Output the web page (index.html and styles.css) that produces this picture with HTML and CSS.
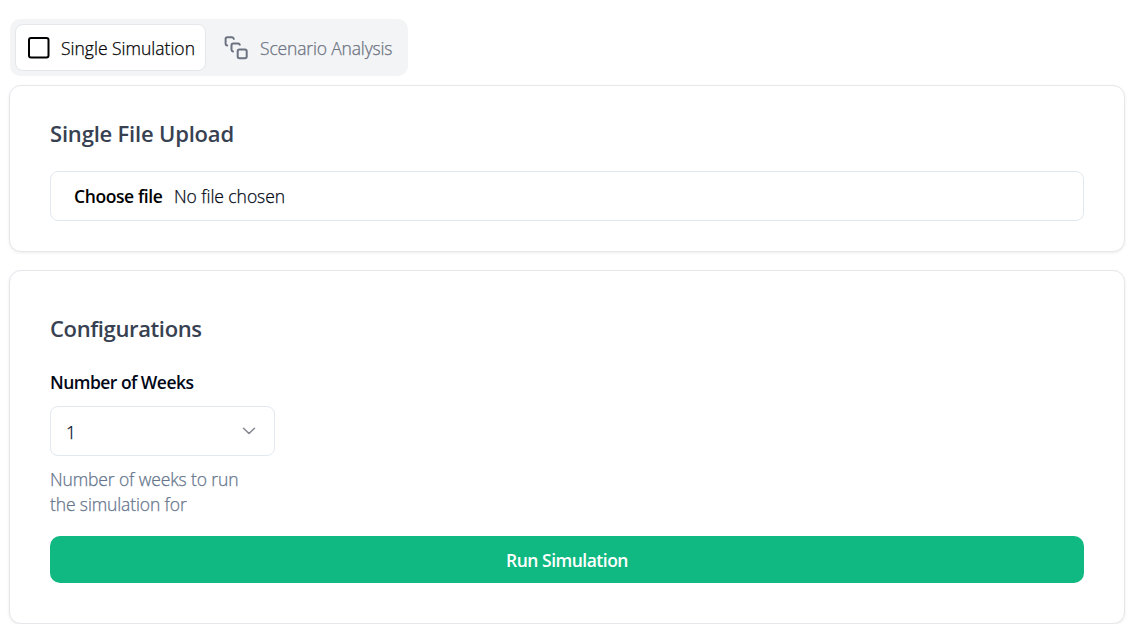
FILE: index.html
```html
<!DOCTYPE html>
<html lang="en">
<head>
<meta charset="utf-8">
<title>Simulation</title>
<link rel="stylesheet" href="styles.css">
</head>
<body>
<main class="page">
  <div class="tabs" role="tablist">
    <button class="tab tab-active" role="tab">
      <svg class="icon-square" viewBox="0 0 22 22" fill="none" stroke="currentColor" stroke-width="2"><rect x="1" y="1" width="19.5" height="19.5" rx="2"/></svg>
      <span class="t-single">Single Simulation</span>
    </button>
    <button class="tab" role="tab">
      <svg class="icon-group" viewBox="0 0 24 24" fill="none" stroke="currentColor" stroke-width="2" stroke-linecap="round" stroke-linejoin="round"><path d="M3.2 9.6A2 2 0 0 1 1.6 7.8V3.1A1.8 1.8 0 0 1 3.4 1.3H8A2 2 0 0 1 9.8 2.9M9 15.5A2 2 0 0 1 7.5 13.7V9.2A1.8 1.8 0 0 1 9.3 7.4H14A2 2 0 0 1 15.8 8.8"/><rect x="13.7" y="13.6" width="9" height="8.7" rx="1.8"/></svg>
      <span class="t-scenario">Scenario Analysis</span>
    </button>
  </div>
  <section class="card upload">
    <h2 class="title t-upload">Single File Upload</h2>
    <label class="file"><span class="choose">Choose file</span><span class="chosen">No file chosen</span></label>
  </section>
  <section class="card config">
    <h2 class="title t-config">Configurations</h2>
    <div class="label">Number of Weeks</div>
    <div class="select" role="combobox"><span>1</span>
      <svg class="chevron" viewBox="0 0 14 8" fill="none" stroke="currentColor" stroke-width="1.5" stroke-linecap="round" stroke-linejoin="round"><path d="M1.5 1.2 7 6.5l5.5-5.3"/></svg>
    </div>
    <p class="hint">Number of weeks to run<br>the simulation for</p>
    <button class="run">Run Simulation</button>
  </section>
</main>
</body>
</html>
```
FILE: styles.css
```css
* { box-sizing: border-box; }
body {
  margin: 0;
  background: #fff;
  color: #020817;
  font: 300 17.5px/25px "Segoe UI", "Open Sans", "Noto Sans", sans-serif;
  -webkit-text-stroke: .25px currentColor;
}
.page { padding: 19px 10px 0 9px; }
button { font: inherit; border: 0; background: none; padding: 0; }
.tabs {
  display: flex;
  width: 398px;
  height: 57px;
  margin-left: 1px;
  padding: 5px;
  border-radius: 10px;
  background: #f3f4f6;
}
.tab {
  display: flex;
  align-items: center;
  height: 47px;
  padding-left: 18px;
  color: #6b7280;
  white-space: nowrap;
}
.tab-active {
  width: 191px;
  padding-left: 12px;
  border: 1px solid #e5e7eb;
  border-radius: 8px;
  background: #fff;
  color: #000;
}
.tab span { padding-top: 2px; }
.t-single { letter-spacing: 0; }
.t-scenario { letter-spacing: -.16px; }
.icon-square { width: 22px; height: 22px; margin-right: 11px; }
.icon-group { width: 24px; height: 24px; margin-right: 12px; }
.card {
  width: 1116px;
  border: 1px solid #e5e7eb;
  border-radius: 12px;
  background: #fff;
  box-shadow: 0 1px 3px rgba(0, 0, 0, .08);
  padding: 0 40px;
}
.upload { height: 167px; margin-top: 9px; padding-top: 31px; }
.config { height: 354px; margin-top: 18px; padding-top: 41px; }
.title {
  margin: 0;
  color: #374151;
  font-size: 22px;
  font-weight: 600;
  line-height: 32px;
  letter-spacing: -.19px;
}
.title, .choose, .label, .run { -webkit-text-stroke: 0; }
.t-config { letter-spacing: -.37px; }
.file {
  display: flex;
  align-items: center;
  height: 50px;
  margin-top: 22px;
  padding-left: 23px;
  border: 1px solid #e2e8f0;
  border-radius: 8px;
}
.choose { width: 100px; font-weight: 600; letter-spacing: -.4px; color: #000; white-space: nowrap; }
.chosen { letter-spacing: -.05px; }
.label { margin-top: 26px; font-weight: 600; letter-spacing: -.53px; }
.select {
  display: flex;
  align-items: center;
  justify-content: space-between;
  width: 225px;
  height: 50px;
  margin-top: 11px;
  padding: 2px 18px 0 15px;
  border: 1px solid #e2e8f0;
  border-radius: 8px;
}
.chevron { width: 14px; height: 8px; margin-bottom: 3px; color: #84878f; }
.hint { margin: 11px 0 0; color: #64748b; letter-spacing: -.12px; }
.run {
  display: block;
  width: 100%;
  height: 47px;
  margin-top: 19px;
  padding-top: 2px;
  border-radius: 10px;
  background: #10b981;
  color: #fff;
  font-weight: 600;
  letter-spacing: -.5px;
}
```
